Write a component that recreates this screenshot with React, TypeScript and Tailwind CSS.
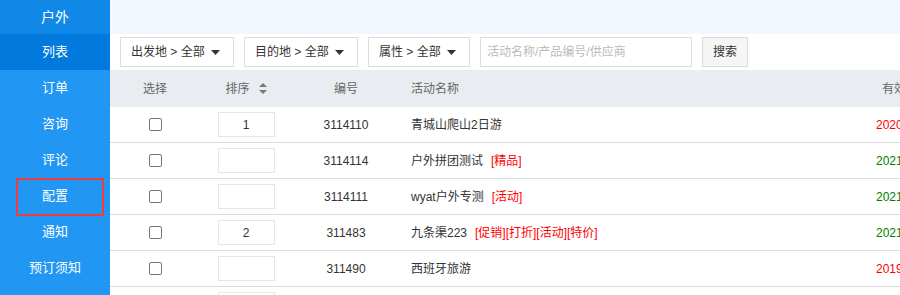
const menu = ['订单', '咨询', '评论', '配置', '通知', '预订须知'];

type Row = { sort: string; code: string; name: string; tags: string[]; date: string; expired: boolean };

const rows: Row[] = [
  { sort: '1', code: '3114110', name: '青城山爬山2日游', tags: [], date: '2020-12-31', expired: true },
  { sort: '', code: '3114114', name: '户外拼团测试', tags: ['精品'], date: '2021-12-31', expired: false },
  { sort: '', code: '3114111', name: 'wyat户外专测', tags: ['活动'], date: '2021-12-31', expired: false },
  { sort: '2', code: '311483', name: '九条渠223', tags: ['促销', '打折', '活动', '特价'], date: '2021-12-31', expired: false },
  { sort: '', code: '311490', name: '西班牙旅游', tags: [], date: '2019-12-31', expired: true },
  { sort: '', code: '', name: '', tags: [], date: '', expired: false },
];

function Dropdown({ label, width }: { label: string; width: string }) {
  return (
    <div className={`${width} h-[30px] flex items-center justify-between border border-[#dcdcdc] bg-white pl-[10px] pr-[13px] text-[12px] text-[#333]`}>
      <span>{label}</span>
      <svg width="9" height="5" viewBox="0 0 9 5"><path d="M0 0h9L4.5 5z" fill="#333" /></svg>
    </div>
  );
}

function SortIcon() {
  return (
    <svg width="8" height="11" viewBox="0 0 8 11" className="ml-[9px]">
      <path d="M4 0l4 4H0z" fill="#777" />
      <path d="M4 11L0 7h8z" fill="#777" />
    </svg>
  );
}

export default function App() {
  return (
    <div className="w-[900px] h-[295px] overflow-hidden flex bg-white" style={{ fontFamily: '"Liberation Sans", "Noto Sans CJK SC", sans-serif' }}>
      {/* Sidebar */}
      <div className="w-[110px] shrink-0 flex flex-col bg-[#2196f3] text-white">
        <div className="h-[34px] flex items-center justify-center bg-[#0f88e8] text-[14px]">户外</div>
        <div className="h-[36px] flex items-center justify-center bg-[#0279dc] text-[13px]">列表</div>
        {menu.map((m) => (
          <div key={m} className="relative h-[36px] flex items-center justify-center text-[13px]">
            {m}
            {m === '配置' && (
              <div className="absolute left-[16px] top-0 w-[88px] h-[38px] border-2 border-[#f03c3c]" />
            )}
          </div>
        ))}
      </div>

      {/* Main */}
      <div className="flex-1 flex flex-col min-w-0">
        <div className="h-[34px] shrink-0 bg-[#f0f7fe]" />
        <div className="h-[36px] shrink-0 flex items-center gap-[10px] px-[10px]">
          <Dropdown label="出发地 > 全部" width="w-[114px]" />
          <Dropdown label="目的地 > 全部" width="w-[114px]" />
          <Dropdown label="属性 > 全部" width="w-[102px]" />
          <div className="w-[212px] h-[30px] flex items-center border border-[#dcdcdc] px-[6px] text-[12px] text-[#bbb]">
            活动名称/产品编号/供应商
          </div>
          <div className="w-[46px] h-[30px] flex items-center justify-center border border-[#dcdcdc] bg-[#f5f5f5] text-[12px] text-[#333]">
            搜索
          </div>
        </div>

        {/* Table header */}
        <div className="h-[37px] shrink-0 flex items-center bg-[#e9ecf0] text-[12px] text-[#666] whitespace-nowrap">
          <div className="w-[90px] shrink-0 text-center">选择</div>
          <div className="w-[92px] shrink-0 flex items-center justify-center">排序<SortIcon /></div>
          <div className="w-[108px] shrink-0 text-center">编号</div>
          <div className="w-[466px] shrink-0 pl-[11px]">活动名称</div>
          <div className="w-[100px] shrink-0 pl-[16px]">有效期</div>
        </div>

        {/* Rows */}
        {rows.map((r, i) => (
          <div key={i} className="h-[36px] shrink-0 flex items-center border-b border-[#d9dee1] text-[12px] text-[#333] whitespace-nowrap">
            <div className="w-[90px] shrink-0 flex justify-center">
              <div className="w-[13px] h-[13px] rounded-[2px] border border-[#777] bg-white" />
            </div>
            <div className="w-[92px] shrink-0 flex justify-center">
              <div className="w-[57px] h-[25px] flex items-center justify-center border border-[#e6e6e6] text-[12px] text-[#333]">
                {r.sort}
              </div>
            </div>
            <div className="w-[108px] shrink-0 text-center">{r.code}</div>
            <div className="w-[466px] shrink-0 pl-[11px] flex items-center">
              <span>{r.name}</span>
              {r.tags.length > 0 && (
                <span className="ml-[8px] text-[#f00]">
                  {r.tags.map((t) => `[${t}]`).join('')}
                </span>
              )}
            </div>
            <div className={`w-[100px] shrink-0 pl-[10px] ${r.expired ? 'text-[#f00]' : 'text-[#008000]'}`}>
              {r.date}
            </div>
          </div>
        ))}
      </div>
    </div>
  );
}
